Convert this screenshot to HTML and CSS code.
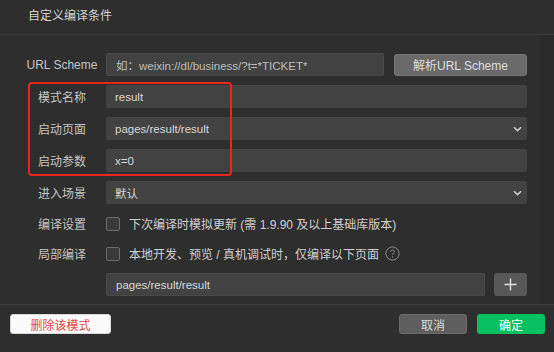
FILE: index.html
```html
<!DOCTYPE html>
<html lang="zh-CN">
<head>
    <meta charset="UTF-8">
    <title>自定义编译条件</title>
    <link rel="stylesheet" href="styles.css">
</head>
<body>
    <div class="dialog">
        <div class="header">自定义编译条件</div>
        <div class="main">
            <div class="form">
                <div class="row">
                    <label class="label">URL Scheme</label>
                    <div class="input short placeholder">如：weixin://dl/business/?t=*TICKET*</div>
                    <button class="btn-parse">解析URL Scheme</button>
                </div>
                <div class="row">
                    <label class="label">模式名称</label>
                    <div class="input">result</div>
                </div>
                <div class="row">
                    <label class="label">启动页面</label>
                    <div class="input select">
                        <span>pages/result/result</span>
                        <svg class="chevron" width="9" height="6" viewBox="0 0 9 6"><path d="M1 1.2 L4.5 4.6 L8 1.2" fill="none" stroke="#cfcfcf" stroke-width="1.5"/></svg>
                    </div>
                </div>
                <div class="row">
                    <label class="label">启动参数</label>
                    <div class="input">x=0</div>
                </div>
                <div class="row">
                    <label class="label">进入场景</label>
                    <div class="input select">
                        <span>默认</span>
                        <svg class="chevron" width="9" height="6" viewBox="0 0 9 6"><path d="M1 1.2 L4.5 4.6 L8 1.2" fill="none" stroke="#cfcfcf" stroke-width="1.5"/></svg>
                    </div>
                </div>
                <div class="row check-row">
                    <label class="label">编译设置</label>
                    <span class="checkbox"></span>
                    <span class="check-text">下次编译时模拟更新 (需 1.9.90 及以上基础库版本)</span>
                </div>
                <div class="row check-row">
                    <label class="label">局部编译</label>
                    <span class="checkbox"></span>
                    <span class="check-text">本地开发、预览 / 真机调试时，仅编译以下页面</span>
                    <svg class="help" width="15" height="15" viewBox="0 0 15 15">
                        <circle cx="7.5" cy="7.5" r="6.6" fill="none" stroke="#8a8a8a" stroke-width="1"/>
                        <path d="M5.6 5.9 C5.6 4.6 6.5 4 7.5 4 C8.6 4 9.4 4.7 9.4 5.7 C9.4 6.9 7.6 7.1 7.6 8.6 L7.6 9.1" fill="none" stroke="#8a8a8a" stroke-width="1"/>
                        <circle cx="7.6" cy="10.9" r="0.7" fill="#8a8a8a"/>
                    </svg>
                </div>
                <div class="row">
                    <span class="label"></span>
                    <div class="input path">pages/result/result</div>
                    <button class="btn-plus">
                        <svg width="13" height="13" viewBox="0 0 13 13"><path d="M6.5 0.5 V12.5 M0.5 6.5 H12.5" stroke="#e0e0e0" stroke-width="1.4"/></svg>
                    </button>
                </div>
                <div class="highlight"></div>
            </div>
            <div class="track"></div>
        </div>
        <div class="footer">
            <button class="btn-delete">删除该模式</button>
            <div class="spacer"></div>
            <button class="btn-cancel">取消</button>
            <button class="btn-ok">确定</button>
        </div>
    </div>
</body>
</html>
```

FILE: styles.css
```css
body {
    margin: 0;
    background-color: #2e2e2e;
    font-family: "Liberation Sans", "Noto Sans CJK SC", sans-serif;
    font-size: 12px;
    color: #c9c9c9;
}

.dialog {
    display: flex;
    flex-direction: column;
    height: 352px;
}

.header {
    height: 34px;
    line-height: 32px;
    padding-left: 28px;
    color: #d2d2d2;
    border-bottom: 1px solid #3b3b3b;
}

.main {
    flex: 1;
    display: flex;
}

.form {
    flex: 1;
    position: relative;
    display: flex;
    flex-direction: column;
    gap: 9px;
    padding-top: 18px;
}

.track {
    width: 14px;
    background-color: #2a2a2a;
}

.row {
    display: flex;
    align-items: center;
    height: 23px;
}

.label {
    width: 72px;
    margin-left: 26px;
    margin-right: 8px;
    text-align: center;
    color: #c4c4c4;
    flex-shrink: 0;
}

.input {
    width: 421px;
    height: 23px;
    box-sizing: border-box;
    padding: 0 9px;
    display: flex;
    align-items: center;
    background-color: #424242;
    border-radius: 2px;
    color: #d8d8d8;
    font-size: 11.5px;
}

.input.short {
    width: 278px;
}

.input.path {
    width: 379px;
    border: 1px solid #4a4a4a;
}

.placeholder {
    color: #bdbdbd;
    border: 1px solid #4a4a4a;
}

.select {
    justify-content: space-between;
    padding-right: 5px;
}

.chevron {
    display: block;
}

button {
    font-family: inherit;
    font-size: 12px;
    border: none;
    border-radius: 3px;
    cursor: pointer;
}

.btn-parse {
    width: 133px;
    height: 22px;
    margin-left: 10px;
    background-color: #6a6a6a;
    color: #dedede;
    border: 1px solid #777;
}

.btn-plus {
    width: 33px;
    height: 23px;
    margin-left: 9px;
    background-color: #585858;
    display: flex;
    align-items: center;
    justify-content: center;
    padding: 0;
}

.check-row {
    height: 21px;
}

.checkbox {
    width: 12px;
    height: 12px;
    border: 1px solid #6a6a6a;
    border-radius: 2px;
    background-color: #3a3a3a;
    margin-right: 9px;
    flex-shrink: 0;
}

.check-text {
    color: #d0d0d0;
}

.help {
    margin-left: 6px;
}

.highlight {
    position: absolute;
    left: 28px;
    top: 47px;
    width: 200px;
    height: 90px;
    border: 2px solid #e8261e;
    border-radius: 4px;
}

.footer {
    height: 38px;
    border-top: 1px solid #3b3b3b;
    display: flex;
    align-items: flex-start;
    padding: 9px 9px 0 10px;
}

.spacer {
    flex: 1;
}

.btn-delete {
    width: 101px;
    height: 20px;
    background-color: #fbfbfb;
    color: #e64340;
    border: 1px solid #d8d8d8;
}

.btn-cancel {
    width: 68px;
    height: 20px;
    background-color: #5e5e5e;
    color: #dadada;
    border: 1px solid #6c6c6c;
}

.btn-ok {
    width: 68px;
    height: 20px;
    margin-left: 10px;
    background-color: #07c160;
    color: #fff;
}
```
